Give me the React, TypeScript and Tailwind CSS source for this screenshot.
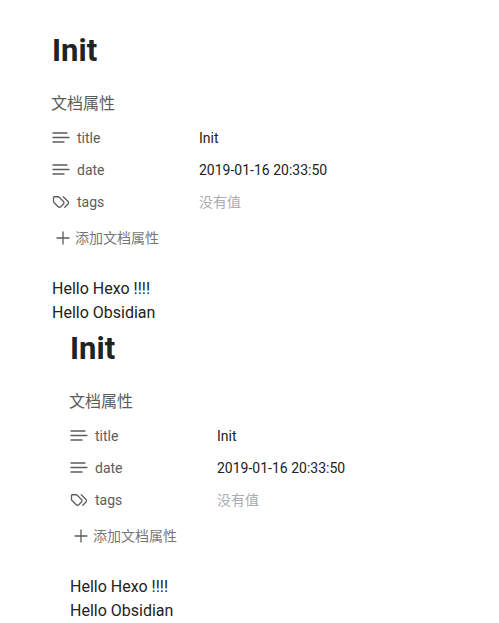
const TextIcon = () => (
  <svg width="18" height="18" viewBox="0 0 18 18" fill="none" stroke="#5c5c5c" strokeWidth="1.3" strokeLinecap="round" className="shrink-0">
    <path d="M1 4h14M1 8.5h16M1 13h11" />
  </svg>
);
const TagsIcon = () => (
  <svg width="18" height="18" viewBox="0 0 24 24" fill="none" stroke="#5c5c5c" strokeWidth="1.7" strokeLinecap="round" strokeLinejoin="round" className="shrink-0">
    <path d="m15 5 6.3 6.3a2.4 2.4 0 0 1 0 3.4L17 19" />
    <path d="M9.6 5.6A2 2 0 0 0 8.2 5H3a1 1 0 0 0-1 1v5.2a2 2 0 0 0 .6 1.4l5.7 5.7a2.4 2.4 0 0 0 3.4 0l3.6-3.6a2.4 2.4 0 0 0 0-3.4z" />
  </svg>
);
const Row = ({ icon, name, value, muted }: { icon: React.ReactNode; name: string; value: string; muted?: boolean }) => (
  <div className="flex h-8 items-center">
    <div className="flex w-[147px] items-center gap-[7px]">
      {icon}
      <span className="text-[14px] text-[#5c5c5c]">{name}</span>
    </div>
    <span className={muted ? "text-[14px] text-[#ababab]" : "text-[14px] text-[#222222]"}>{value}</span>
  </div>
);
const Doc = ({ className }: { className: string }) => (
  <div className={className}>
    <h1 className="text-[31px] font-bold leading-[38px] text-[#222222]">Init</h1>
    <div className="mt-[21.5px] -ml-px text-[16px] leading-[24px] text-[#5c5c5c]">文档属性</div>
    <div className="mt-[6.5px]">
      <Row icon={<TextIcon />} name="title" value="Init" />
      <Row icon={<TextIcon />} name="date" value="2019-01-16 20:33:50" />
      <Row icon={<TagsIcon />} name="tags" value="没有值" muted />
    </div>
    <div className="mt-[4px] flex h-8 items-center gap-[5px] pl-1 text-[14px] text-[#777777]">
      <svg width="14" height="14" viewBox="0 0 14 14" stroke="#5c5c5c" strokeWidth="1.3" strokeLinecap="round" className="shrink-0"><path d="M7 1v12M1 7h12" /></svg>
      <span>添加文档属性</span>
    </div>
    <div className="mt-[23px] text-[16px] leading-[24px] text-[#222222]">
      <p>Hello Hexo !!!!</p>
      <p>Hello Obsidian</p>
    </div>
  </div>
);
export default function App() {
  return (
    <div className="h-[623px] w-[499px] overflow-hidden bg-white font-['Roboto','Noto_Sans_CJK_SC',sans-serif]">
      <Doc className="pl-[52px] pt-[32px]" />
      <Doc className="pl-[70px] pt-[5px]" />
    </div>
  );
}
